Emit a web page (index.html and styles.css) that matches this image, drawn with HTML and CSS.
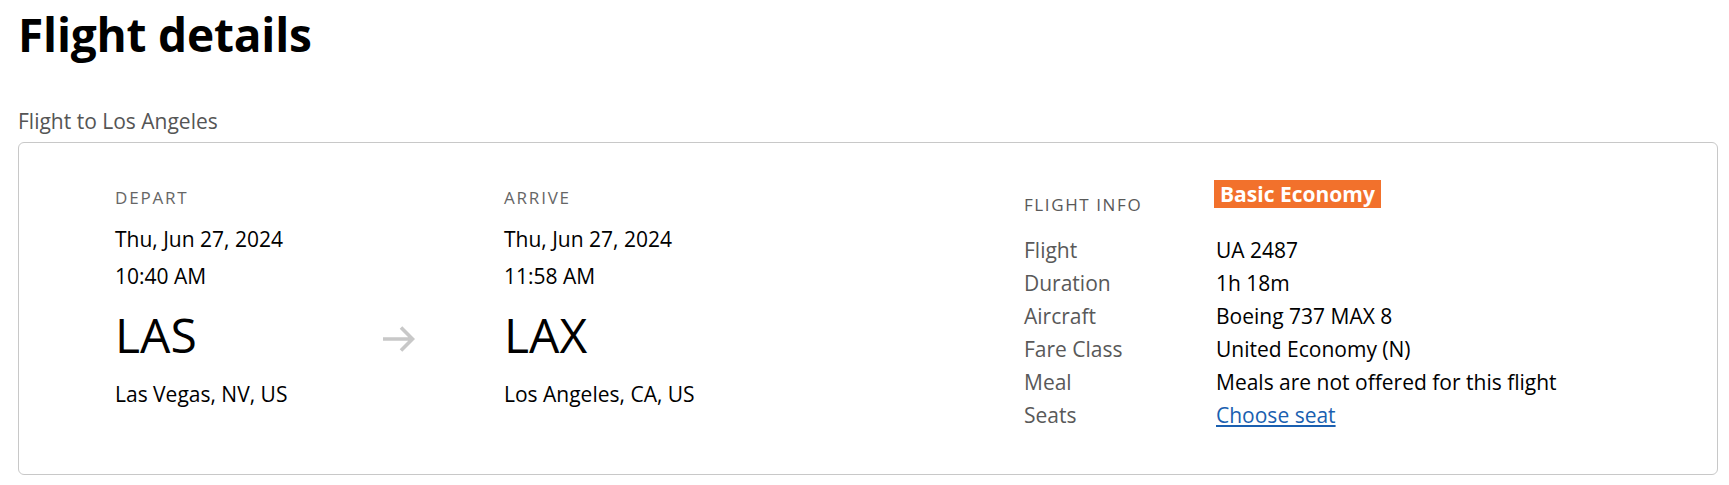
FILE: index.html
```html
<!DOCTYPE html>
<html lang="en">
<head>
<meta charset="utf-8">
<title>Flight details</title>
<link rel="stylesheet" href="styles.css">
</head>
<body>
<main class="page">
  <h1 class="title">Flight details</h1>
  <p class="subtitle">Flight to Los Angeles</p>
  <section class="card">
    <div class="route">
      <div class="label r1 c1">Depart</div>
      <div class="label r1 c3">Arrive</div>

      <div class="when r2 c1">Thu, Jun 27, 2024<br>10:40 AM</div>
      <div class="when r2 c3">Thu, Jun 27, 2024<br>11:58 AM</div>

      <div class="code r3 c1">LAS</div>
      <div class="arrow r3 c2" aria-hidden="true">
        <svg width="33" height="26" viewBox="0 0 33 26"><path d="M1 13 H30 M19 1.5 L30.5 13 L19 24.5" fill="none" stroke="#c8c8c8" stroke-width="3.6" stroke-linecap="butt" stroke-linejoin="miter"/></svg>
      </div>
      <div class="code r3 c3">LAX</div>

      <div class="city r4 c1">Las Vegas, NV, US</div>
      <div class="city r4 c3">Los Angeles, CA, US</div>
    </div>

    <div class="info">
      <div class="info-head">
        <div class="label info-label">Flight info</div>
        <div class="badge">Basic Economy</div>
      </div>
      <dl class="rows">
        <dt>Flight</dt><dd>UA 2487</dd>
        <dt>Duration</dt><dd>1h 18m</dd>
        <dt>Aircraft</dt><dd>Boeing 737 MAX 8</dd>
        <dt>Fare Class</dt><dd>United Economy (N)</dd>
        <dt>Meal</dt><dd>Meals are not offered for this flight</dd>
        <dt>Seats</dt><dd><a href="#" class="link">Choose seat</a></dd>
      </dl>
    </div>
  </section>
</main>
</body>
</html>
```
FILE: styles.css
```css
* { box-sizing: border-box; }

html, body {
  margin: 0;
  background: #ffffff;
}

body {
  font-family: "Open Sans", "Noto Sans", Arial, sans-serif;
  color: #000000;
}

.page {
  padding: 0 11px 0 18px;
}

.title {
  margin: 0;
  padding-top: 4px;
  font-size: 46px;
  line-height: 60px;
  font-weight: 700;
  letter-spacing: -0.2px;
}

.subtitle {
  margin: 43px 0 7px;
  font-size: 21px;
  line-height: 28px;
  color: #555555;
}

.card {
  display: flex;
  border: 1px solid #c8c8c8;
  border-radius: 6px;
  padding: 36px 20px 42px 96px;
}

.route {
  display: grid;
  grid-template-columns: 268px 121px 520px;
  padding-top: 8px;
  align-content: start;
}

.r1 { grid-row: 1; }
.r2 { grid-row: 2; }
.r3 { grid-row: 3; }
.r4 { grid-row: 4; }
.c1 { grid-column: 1; }
.c2 { grid-column: 2; }
.c3 { grid-column: 3; }

.label {
  font-size: 17px;
  line-height: 22px;
  letter-spacing: 1.8px;
  text-transform: uppercase;
  color: #666666;
}

.when {
  margin-top: 12px;
  font-size: 21px;
  line-height: 37px;
}

.code {
  margin-top: 7px;
  font-size: 48px;
  line-height: 66px;
}

.arrow {
  display: flex;
  align-items: center;
  align-self: stretch;
  margin-top: 7px;
  padding-top: 7px;
}

.arrow svg { display: block; margin-left: -1px; }

.city {
  margin-top: 12px;
  font-size: 21px;
  line-height: 28px;
}

.info {
  display: flex;
  flex-direction: column;
}

.info-head {
  display: grid;
  grid-template-columns: 190px auto;
  height: 37px;
}

.info-label {
  align-self: end;
  letter-spacing: 1.6px;
  color: #595959;
}

.badge {
  align-self: start;
  justify-self: start;
  margin-top: 1px;
  background: #f2712c;
  color: #ffffff;
  font-weight: 700;
  font-size: 21px;
  line-height: 28px;
  padding: 0 6px;
}

.rows {
  display: grid;
  grid-template-columns: 192px auto;
  margin: 18px 0 0;
  font-size: 21px;
  line-height: 33px;
}

.rows dt {
  color: #595959;
}

.rows dd {
  margin: 0;
  color: #000000;
}

.link {
  color: #1a5fb0;
  text-decoration: underline;
  text-underline-offset: 2px;
}
```
